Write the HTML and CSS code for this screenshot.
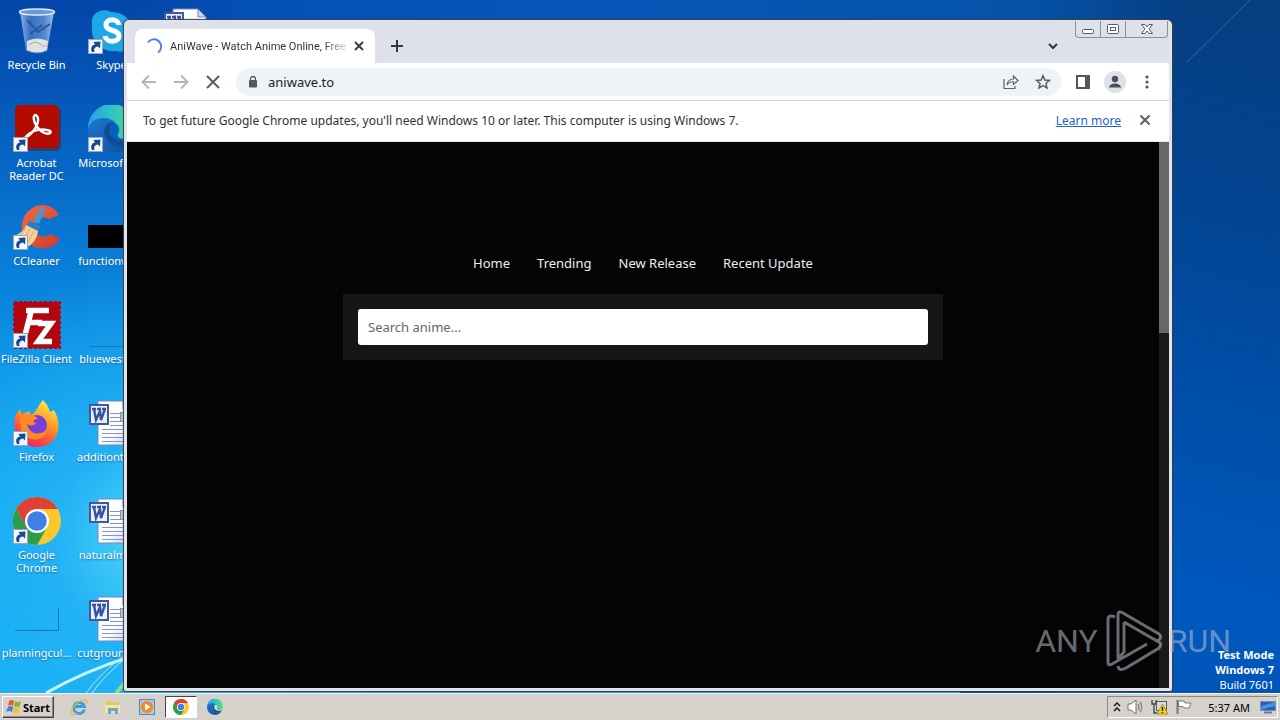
FILE: index.html
```html
<!DOCTYPE html>
<html lang="en">
<head>
<meta charset="utf-8">
<title>Desktop</title>
<link rel="stylesheet" href="styles.css">
</head>
<body>
<svg class="defs" aria-hidden="true">
  <defs>
    <linearGradient id="glass" x1="0" x2="1"><stop offset="0" stop-color="#9dbce6"/><stop offset=".3" stop-color="#3f74c4"/><stop offset=".7" stop-color="#5a8ad0"/><stop offset="1" stop-color="#a9c6ea"/></linearGradient>
    <linearGradient id="edgeTop" x1="0" x2="1"><stop offset="0" stop-color="#2b9fe6"/><stop offset=".5" stop-color="#2ec5c8"/><stop offset="1" stop-color="#5fdc70"/></linearGradient>
    <linearGradient id="edgeLow" x1="0" y1="0" x2="1" y2="1"><stop offset="0" stop-color="#1b78cf"/><stop offset="1" stop-color="#0c4f9e"/></linearGradient>
    <linearGradient id="fire" x1=".8" y1="0" x2=".3" y2="1"><stop offset="0" stop-color="#fff04a"/><stop offset=".4" stop-color="#ffa02a"/><stop offset=".75" stop-color="#ff4a3e"/><stop offset="1" stop-color="#e8206c"/></linearGradient>
    <linearGradient id="paper" x1="0" y1="0" x2="1" y2="1"><stop offset="0" stop-color="#fff"/><stop offset=".6" stop-color="#fbfcff"/><stop offset="1" stop-color="#c8cdec"/></linearGradient>
    <linearGradient id="cc" x1="0" y1="0" x2="1" y2="1"><stop offset="0" stop-color="#ee6a4c"/><stop offset="1" stop-color="#d23a25"/></linearGradient>
    <symbol id="arrow" viewBox="0 0 15 15">
      <rect x=".5" y=".5" width="14" height="14" fill="#f4f6fa" stroke="#9aa4b4"/>
      <path d="M4 13C2 9 4 6 7 5.500L5.500 3L12.500 2.500L12 9.500L10 7.500C7 8 5.500 9.500 6.500 13Z" fill="#174a96"/>
    </symbol>
    <symbol id="chrome" viewBox="0 0 48 48">
      <circle cx="24" cy="24" r="24" fill="#fcc62f"/>
      <path d="M24 24L13.600 30L3.200 12A24 24 0 0 1 44.800 12H24Z" fill="#dd4334"/>
      <path d="M3.200 12A24 24 0 0 0 24 48L34.400 30L24 24L13.600 30Z" fill="#2d9c4b"/>
      <circle cx="24" cy="24" r="12" fill="#fff"/><circle cx="24" cy="24" r="9.800" fill="#3f7fe8"/>
    </symbol>
    <symbol id="edge" viewBox="0 0 48 48">
      <path d="M0 24A24 24 0 0 1 48 22C48 31 41 34 36 34C31 34 29 31 30 29C33 25 31 16 20 16C10 16 3 21 0 24Z" fill="url(#edgeTop)"/>
      <path d="M0 25C2 12 18 10 27 17C18 16 15 24 17 31C20 41 33 43 43 37C38 46 28 49 20 47.500C8 46 0 36 0 25Z" fill="url(#edgeLow)"/>
      <path d="M17 31C15 24 18 18 24 18C18 24 22 37 38 36C42 36 45 34 45 34C40 44 22 45 17 31Z" fill="#134a91"/>
    </symbol>
    <symbol id="word" viewBox="0 0 48 48">
      <path d="M10 1H35L43 9V45H10Z" fill="url(#paper)" stroke="#7885bc"/>
      <path d="M35 1V9H43Z" fill="#cdd5ee" stroke="#7885bc"/>
      <path d="M22 13.500H32M22 17.500H32M22 21.500H32M22 25.500H40M14 29.500H40M14 33.500H40M14 37.500H40M14 41.500H40" stroke="#8693cf"/>
      <rect x="32.500" y="12.500" width="8" height="9" fill="#b9c3d6" stroke="#8592a8"/>
      <rect x="2" y="5" width="18" height="19" fill="#e9effb" stroke="#42599f" stroke-width="2"/>
      <path d="M4 9H8M9 9H13M14 9H18M6 9L8 20L12 11L13 20L17 9" fill="none" stroke="#3553a0" stroke-width="2.400"/>
    </symbol>
  </defs>
</svg>

<div class="screen">
<main class="desktop">
  <svg class="rays" viewBox="0 0 130 90" aria-hidden="true">
    <path d="M46 90Q85 68 130 54" stroke="#c6f5fc" stroke-width="3"/>
    <path d="M86 90Q102 68 130 48M92 90Q106 70 130 52" stroke="#a5ecf8" stroke-width="1"/>
    <path d="M116 90L130 74" stroke="#7fe38c" stroke-width="4"/>
  </svg>
  <svg class="streak" viewBox="0 0 120 80" aria-hidden="true"><path d="M27 62L90 0" stroke="#4a7fba" stroke-width="1" opacity=".6"/></svg>

  <ul class="icons">
    <li><svg viewBox="0 0 48 48"><path d="M7 4L13 43Q24 48 34 43L41 4Z" fill="url(#glass)" opacity=".9"/><path d="M14 33Q24 28 35 33L34 42Q24 47 14 42Z" fill="#dfe3e4"/><path d="M16 37Q22 32 27 36T34 37" fill="none" stroke="#bda68b"/><path d="M14 12L25 24L37 16M17 26L29 17" fill="none" stroke="#2856a4" stroke-width="2"/><ellipse cx="24" cy="4" rx="17.500" ry="3" fill="#6b9adb" stroke="#dfe9f5" stroke-width="1.500"/></svg><span>Recycle Bin</span></li>
    <li><svg viewBox="0 0 48 48"><rect x="2" y="1" width="46" height="44" rx="5" fill="#601418" opacity=".5"/><rect x="2" y="-1" width="44" height="43" rx="5" fill="#b30b00"/><path d="M12 32C20 28 28 16 24 10C20 6 18 16 28 25C36 31 42 25 34 24C25 22 16 26 12 32Z" fill="none" stroke="#fff" stroke-width="2.400"/><use href="#arrow" x="0" y="31" width="15" height="15"/></svg><span>Acrobat Reader DC</span></li>
    <li><svg viewBox="0 0 48 48"><path d="M46 11L36 15C28 10 22 16 22 24C23 33 32 35 38 30L47 35C38 49 17 47 10 31C5 13 18 0 31 1C38 2 43 5 46 11Z" fill="url(#cc)"/><path d="M29 3L32 5L26 20L20 17Z" fill="#3d9bd5"/><path d="M16 17L28 22L25 28L13 22Z" fill="#2c7fbf"/><path d="M13 21L25 27C24 35 20 40 13 44L1 32C6 30 11 27 13 21Z" fill="#f2d29c"/><path d="M17 25L9 37M21 27L14 40M13 24L5 34" stroke="#d9ac6c"/><use href="#arrow" x="0" y="31" width="15" height="15"/></svg><span>CCleaner</span></li>
    <li><svg viewBox="0 0 48 48"><rect x="1" y="0" width="46" height="46" fill="#b4060e" stroke="#b4060e" stroke-width="2" stroke-dasharray="3 2"/><path d="M13 8.500H36M18.500 8L11 37M15 20.500H29M25 21.500H38L25 39.500H39" fill="none" stroke="#fff" stroke-width="5.500"/><use href="#arrow" x="0" y="31" width="15" height="15"/></svg><span>FileZilla Client</span></li>
    <li><svg viewBox="0 0 48 48"><path d="M30 0C34 4 36 8 37 12L41 10C51 27 44 46 25 47C8 48-3 30 3 14L7 9L9 14L16 11L18 15C24 12 25 5 30 0Z" fill="url(#fire)"/><circle cx="24" cy="25" r="10" fill="#7640d8"/><path d="M7 18C14 14 22 14 25 19C20 19 19 22 23 23C20 27 16 25 14 24C16 34 27 37 34 29C34 42 13 44 8 29Z" fill="#ff8a25"/><use href="#arrow" x="0" y="31" width="15" height="15"/></svg><span>Firefox</span></li>
    <li><svg viewBox="0 0 48 48"><use href="#chrome" y="-1" width="48" height="48"/><use href="#arrow" x="0" y="31" width="15" height="15"/></svg><span>Google Chrome</span></li>
    <li><svg viewBox="0 0 48 48"><path d="M2 34.500H45.500V12" fill="none" stroke="#1b73b8"/></svg><span>planningcul...</span></li>

    <li><svg viewBox="0 0 48 48"><path d="M4 11A13 13 0 0 1 23 4A21 21 0 0 1 45 28A13 13 0 0 1 28 43A21 21 0 0 1 4 20Z" fill="#1ba8e6"/><path d="M31 17C30 10 18 10 18 17C18 24 31 21 31 28C31 35 18 35 17 28" fill="none" stroke="#fff" stroke-width="5"/><use href="#arrow" x="0" y="31" width="15" height="15"/></svg><span>Skype</span></li>
    <li><svg viewBox="0 0 48 48"><use href="#edge" y="-1" width="48" height="48"/><use href="#arrow" x="0" y="31" width="15" height="15"/></svg><span>Microsoft E...</span></li>
    <li><svg viewBox="0 0 48 48"><rect y="21" width="48" height="23"/></svg><span>functionwa...</span></li>
    <li><svg viewBox="0 0 48 48"><path d="M2 44.500H45.500" stroke="#1b73b8"/></svg><span>bluewester...</span></li>
    <li><svg viewBox="0 0 48 48"><use href="#word" width="48" height="48"/></svg><span>additiontrai...</span></li>
    <li><svg viewBox="0 0 48 48"><use href="#word" width="48" height="48"/></svg><span>naturalmor...</span></li>
    <li><svg viewBox="0 0 48 48"><use href="#word" width="48" height="48"/></svg><span>cutgrounds...</span></li>

    <li><svg viewBox="0 0 48 48"><use href="#word" width="48" height="48"/></svg></li>
  </ul>

  <section class="window">
    <header class="tabs">
      <div class="tab">
        <svg width="18" height="18" viewBox="0 0 18 18"><path d="M2 5.500A7.200 7.200 0 1 1 12 15.500" fill="none" stroke="#4f80dc" stroke-width="2"/></svg>
        <span class="tab-title">AniWave - Watch Anime Online, Free</span>
        <button aria-label="Close tab"><svg width="10" height="10" viewBox="0 0 10 10"><path d="M1 1L9 9M9 1L1 9" stroke="#3c4043" stroke-width="2"/></svg></button>
      </div>
      <button class="new-tab" aria-label="New tab"><svg width="12" height="12" viewBox="0 0 12 12"><path d="M6 0V12M0 6H12" stroke="#34383d" stroke-width="2"/></svg></button>
      <button class="tab-search" aria-label="Search tabs"><svg width="10" height="7" viewBox="0 0 10 7"><path d="M1 1L5 5L9 1" fill="none" stroke="#34383d" stroke-width="2"/></svg></button>
      <div class="caption">
        <button aria-label="Minimize"><svg width="12" height="12" viewBox="0 0 12 12"><rect x=".5" y="6.500" width="11" height="4" rx="1" fill="#fff" stroke="#555b66"/></svg></button>
        <button aria-label="Maximize"><svg width="12" height="10" viewBox="0 0 12 10"><rect x=".5" y=".5" width="11" height="9" rx="1" fill="#fff" stroke="#555b66"/><rect x="3.500" y="3.500" width="5" height="3" fill="none" stroke="#555b66"/></svg></button>
        <button class="caption-close" aria-label="Close"><svg width="12" height="10" viewBox="0 0 12 10"><path d="M.5.5H4L6 3L8 .5H11.500L8 5L11.500 9.500H8L6 7L4 9.500H.5L4 5Z" fill="#fff" stroke="#555b66"/></svg></button>
      </div>
    </header>

    <div class="toolbar">
      <button aria-label="Back"><svg width="16" height="16" viewBox="0 0 16 16"><path d="M15 8H2M8 1.500L1.500 8L8 14.500" fill="none" stroke="#b5b8bb" stroke-width="2"/></svg></button>
      <button aria-label="Forward"><svg width="16" height="16" viewBox="0 0 16 16"><path d="M1 8H14M8 1.500L14.500 8L8 14.500" fill="none" stroke="#b5b8bb" stroke-width="2"/></svg></button>
      <button aria-label="Stop"><svg width="14" height="14" viewBox="0 0 14 14"><path d="M1 1L13 13M13 1L1 13" stroke="#5a5e63" stroke-width="2"/></svg></button>
      <div class="omnibox">
        <svg width="10" height="12" viewBox="0 0 10 12"><rect x="1" y="4" width="8" height="7.500" rx="1" fill="#54585d"/><path d="M2.500 5V3A2.500 2.500 0 0 1 7.500 3V5" fill="none" stroke="#54585d" stroke-width="1.300"/></svg>
        <input type="text" value="aniwave.to" aria-label="Address">
        <button aria-label="Share"><svg width="16" height="16" viewBox="0 0 16 16"><path d="M1 5V14.500H12V12M4 11C4.500 7 7 5 10.500 5V2L15 6.500L10.500 10.500V7.800C7.500 7.500 5.500 8.500 4 11Z" fill="none" stroke="#5f6368" stroke-width="1.200"/></svg></button>
        <button aria-label="Bookmark"><svg width="16" height="16" viewBox="0 0 16 16"><path d="M8 1.800L9.800 6L14.500 6.400L11 9.500L12 14L8 11.700L4 14L5 9.500L1.500 6.400L6.200 6Z" fill="none" stroke="#5a5e63" stroke-width="1.500"/></svg></button>
      </div>
      <button aria-label="Side panel"><svg width="14" height="14" viewBox="0 0 14 14"><path d="M0 0H14V14H0ZM2 2V12H9V2Z" fill="#54585d" fill-rule="evenodd"/></svg></button>
      <button aria-label="Profile"><svg width="22" height="22" viewBox="0 0 22 22"><circle cx="11" cy="11" r="11" fill="#dee1e6"/><circle cx="11" cy="8" r="3.200" fill="#484f5e"/><path d="M5 16.500V15.500Q7 12.500 11 12.500T17 15.500V16.500Z" fill="#484f5e"/></svg></button>
      <button aria-label="Menu"><svg width="4" height="14" viewBox="0 0 4 14"><g fill="#54585d"><circle cx="2" cy="2" r="1.600"/><circle cx="2" cy="7" r="1.600"/><circle cx="2" cy="12" r="1.600"/></g></svg></button>
    </div>

    <div class="infobar">
      <span>To get future Google Chrome updates, you'll need Windows 10 or later. This computer is using Windows 7.</span>
      <a href="#">Learn more</a>
      <button aria-label="Dismiss"><svg width="10" height="10" viewBox="0 0 10 10"><path d="M.5.5L9.500 9.500M9.500.5L.5 9.500" stroke="#5a5e63" stroke-width="2"/></svg></button>
    </div>

    <div class="page">
      <div class="site">
        <nav>
          <a href="#">Home</a><a href="#">Trending</a><a href="#">New Release</a><a href="#">Recent Update</a>
        </nav>
        <form class="search"><input type="text" placeholder="Search anime..." aria-label="Search anime"></form>
      </div>
      <div class="scroll"><div class="thumb"></div></div>
    </div>
  </section>

  <div class="watermark">
    <span>ANY</span>
    <svg width="58" height="62" viewBox="0 0 58 62"><path d="M9 7Q2 4 2 10V53Q2 56 6 54L41 34M12 49V5Q12 0 17 3L53 24Q57 28 51 31L18 12M18 12V42L12 49M12 56Q13 62 20 58L53 38Q57 33 51 31" fill="none" stroke="currentColor" stroke-width="3"/></svg>
    <span>RUN</span>
  </div>

  <div class="build"><b>Test Mode</b><b>Windows 7</b><span>Build 7601</span></div>
</main>

<footer class="taskbar">
  <button class="start"><svg width="16" height="16" viewBox="0 0 16 16"><path d="M3 2Q6 0 8 2L7 7Q4 5 2 7Z" fill="#ed5b2b"/><path d="M9 2Q12 4 15 2L14 7Q11 9 8 7Z" fill="#80b83a"/><path d="M2 8Q5 6 7 8L6 13Q3 11 0 13Z" fill="#3b83d6"/><path d="M8 8Q11 10 14 8L12 14Q9 15 7 13Z" fill="#f6bf26"/></svg>Start</button>
  <div class="quick">
    <button aria-label="Internet Explorer"><svg width="18" height="18" viewBox="0 0 18 18"><path d="M14.500 11.500A5.500 5.500 0 1 1 14.500 8.500H5" fill="none" stroke="#3a9ee0" stroke-width="2.800"/><path d="M1 16C-1 10 12 0 16 2Q18 3 16 6M1 16Q3 18 7 15" fill="none" stroke="#e3ba3d" stroke-width="1.300"/></svg></button>
    <button aria-label="Explorer"><svg width="18" height="18" viewBox="0 0 18 18"><path d="M2 3H7L8 4H15V15H2Z" fill="#e5c667"/><path d="M1 7H16V15H1Z" fill="#f7e39b"/><path d="M4 10H14V16H11V13H7V16H4Z" fill="#67a9d6"/></svg></button>
    <button aria-label="Media Player"><svg width="18" height="18" viewBox="0 0 18 18"><rect x="1.500" y="1.500" width="15" height="15" fill="#a7c7ea" stroke="#5d86bd"/><circle cx="9" cy="9" r="6" fill="#f28a1c"/><path d="M7 5.500L12.500 9L7 12.500Z" fill="#fff"/></svg></button>
    <button class="active" aria-label="Chrome"><svg width="16" height="16" viewBox="0 0 48 48"><use href="#chrome" width="48" height="48"/></svg></button>
    <button aria-label="Edge"><svg width="16" height="16" viewBox="0 0 48 48"><use href="#edge" width="48" height="48"/></svg></button>
  </div>
  <div class="tray">
    <svg width="8" height="12" viewBox="0 0 8 12"><path d="M1 5L4 2L7 5M1 10L4 7L7 10" fill="none" stroke="#111" stroke-width="1.400"/></svg>
    <svg width="18" height="16" viewBox="0 0 18 16"><path d="M1 5H4L9 1V15L4 11H1Z" fill="#fff" stroke="#70747a"/><path d="M11 5Q13 8 11 11M13 3Q16.500 8 13 13" fill="none" stroke="#85898e" stroke-width="1.400"/></svg>
    <svg width="18" height="16" viewBox="0 0 18 16"><rect x="5.500" y="2.500" width="10" height="9" fill="#d7dbe0" stroke="#55595f"/><path d="M1 1V5H5V1M3 5V14H6" fill="none" stroke="#44484e" stroke-width="1.400"/><path d="M11.500 5L17 15H6Z" fill="#f6cf2c" stroke="#b79005"/><path d="M11.500 8V12M11.500 13V14" stroke="#111" stroke-width="1.300"/></svg>
    <svg width="18" height="16" viewBox="0 0 18 16"><path d="M2.500 1V15" stroke="#74787e" stroke-width="2"/><path d="M3.500 2H9L10 4H16L14 9H9L8 7.500H3.500Z" fill="#fff" stroke="#777"/></svg>
    <time>5:37 AM</time>
    <svg width="16" height="14" viewBox="0 0 16 14"><path d="M.5 1.500H15.500V10.500H.5Z" fill="#1f5fc0" stroke="#7890b5"/><path d="M1 6L15 2V6L1 10Z" fill="#4b90dd"/><path d="M4 12.500H12" stroke="#6d7c90" stroke-width="2"/></svg>
  </div>
</footer>
</div>
</body>
</html>
```
FILE: styles.css
```css
* { box-sizing: border-box; }
body {
  margin: 0;
  font-family: "Noto Sans", "Open Sans", sans-serif;
  font-size: 12px;
  color: #303236;
}
button {
  display: flex;
  align-items: center;
  justify-content: center;
  padding: 0;
  border: 0;
  background: none;
  font: inherit;
}
svg { display: block; flex: none; }
.defs { position: absolute; width: 0; height: 0; }

.screen { display: flex; flex-direction: column; height: 100vh; }
.desktop {
  position: relative;
  flex: 1;
  overflow: hidden;
  background:
    radial-gradient(circle at 12% 78%, #4ed8f6 0, rgba(40, 180, 245, .8) 8%, rgba(10, 160, 245, 0) 22%),
    linear-gradient(180deg, #0345a8 0, #0556b8 13%, #0879d4 35%, #0a96e8 55%, #0daaf4 75%, #12b0f6 100%);
}
.desktop::before {
  content: "";
  position: absolute;
  inset: 0 0 0 75%;
  background: linear-gradient(195deg, #073f80 0, #03438f 25%, #004da6 50%, #0058be 80%, #0052b4 100%);
}
.desktop::after {
  content: "";
  position: absolute;
  inset: 0 0 auto 0;
  height: 24px;
  background: linear-gradient(90deg, rgba(3, 69, 168, 0) 10%, #0450b4 20%, #0757b8 50%, #0652a8 80%, rgba(6, 71, 143, 0) 92%);
}
.rays { position: absolute; left: 0; bottom: 0; width: 130px; fill: none; }
.streak { position: absolute; right: 0; top: 0; width: 120px; z-index: 1; }

.icons {
  position: relative;
  z-index: 1;
  display: grid;
  grid-auto-flow: column;
  grid-template-rows: repeat(7, 98px);
  grid-auto-columns: 73px;
  column-gap: 2px;
  justify-content: start;
  margin: 0;
  padding: 8px 0 0;
  list-style: none;
}
.icons li { display: flex; flex-direction: column; align-items: center; gap: 2px; }
.icons svg { width: 48px; height: 48px; overflow: visible; }
.icons span {
  font-size: 11px;
  line-height: 13px;
  text-align: center;
  color: #fff;
  text-shadow: 0 1px 2px #1a62a8;
}

.window {
  position: absolute;
  z-index: 2;
  inset: 20px 108px 2px 124px;
  display: flex;
  flex-direction: column;
  border: solid #e2e4ea;
  border-width: 1px 3px 3px;
  border-radius: 5px 5px 2px 2px;
  background: #fff;
  box-shadow: 0 0 1px 1px #34404e;
}
.tabs {
  position: relative;
  display: flex;
  align-items: flex-end;
  height: 42px;
  padding: 0 105px 0 8px;
  background: #dee1e9;
}
.tab {
  display: flex;
  align-items: center;
  gap: 6px;
  width: 240px;
  height: 34px;
  padding: 0 11px;
  border-radius: 8px 8px 0 0;
  background: #fff;
}
.tab-title {
  flex: 1;
  white-space: nowrap;
  font: 11px "Roboto", sans-serif;
  mask-image: linear-gradient(90deg, #000 86%, rgba(0, 0, 0, .1));
}
.tab button { width: 10px; }
.new-tab { width: 44px; height: 34px; }
.tab-search { width: 22px; height: 34px; margin-left: auto; }
.caption {
  position: absolute;
  top: 0;
  right: 1px;
  display: flex;
  height: 17px;
  border: 1px solid #8a909b;
  border-top: 0;
  border-radius: 0 0 4px 4px;
}
.caption button { width: 25px; border-right: 1px solid #8a909b; }
.caption .caption-close { width: 41px; border: 0; }

.toolbar {
  display: flex;
  align-items: center;
  height: 38px;
  padding: 0 6px;
  border-bottom: 1px solid #d5d7da;
}
.toolbar > button { width: 32px; height: 28px; }
.omnibox {
  flex: 1;
  display: flex;
  align-items: center;
  height: 28px;
  margin: 0 6px 0 7px;
  padding: 0 2px 0 12px;
  border-radius: 14px;
  background: #f0f3f5;
}
.omnibox input {
  flex: 1;
  min-width: 0;
  padding: 0 10px;
  border: 0;
  background: none;
  font: 13px "Noto Sans", sans-serif;
  color: #202124;
}
.omnibox button { width: 32px; }

.infobar {
  display: flex;
  align-items: center;
  height: 41px;
  padding: 0 19px 2px 16px;
  border-bottom: 1px solid #e4e4e4;
}
.infobar a { margin-left: auto; margin-right: 19px; color: #1a62cc; }

.page { flex: 1; display: flex; background: #040404; }
.site { flex: 1; padding: 111px 20px 0; }
nav { display: flex; justify-content: center; gap: 27px; line-height: 20px; font-size: 13px; }
nav a { color: #eee; text-decoration: none; }
.search { max-width: 600px; margin: 21px auto 0; padding: 15px; background: #161616; }
.search input {
  display: block;
  width: 100%;
  height: 36px;
  padding: 0 10px;
  border: 0;
  border-radius: 3px;
  background: #fff;
  font: 13px "Noto Sans", sans-serif;
}
.search input::placeholder { color: #666; }
.scroll { width: 10px; background: #1a1a1a; }
.thumb { height: 35%; background: #686868; }

.watermark {
  position: absolute;
  z-index: 3;
  right: 49px;
  bottom: 21px;
  display: flex;
  align-items: center;
  gap: 4px;
  color: rgba(190, 195, 205, .55);
  font: 32px "Roboto", sans-serif;
}
.watermark svg { margin-left: 4px; }
.build {
  position: absolute;
  z-index: 4;
  right: 6px;
  bottom: 1px;
  display: flex;
  flex-direction: column;
  align-items: flex-end;
  font-size: 11px;
  line-height: 15px;
  color: #fff;
}

.taskbar {
  display: flex;
  align-items: center;
  height: 27px;
  padding: 0 2px;
  border-top: 1px solid #f8f7f4;
  background: #d6d1ca;
}
.start {
  gap: 1px;
  width: 52px;
  height: 22px;
  border: 1px solid;
  border-color: #fff #444 #444 #fff;
  box-shadow: inset -1px -1px #8c8983;
  font-size: 11px;
  font-weight: 700;
  color: #000;
}
.quick { display: flex; padding-left: 8px; }
.quick button { width: 34px; height: 22px; }
.quick .active {
  width: 32px;
  margin: 0 1px;
  border: 1px solid;
  border-color: #444 #fff #fff #444;
  background: #fff;
}
.tray {
  display: flex;
  align-items: center;
  gap: 6px;
  height: 22px;
  margin-left: auto;
  padding: 0 1px 0 5px;
  border: 1px solid;
  border-color: #8c8983 #fff #fff #8c8983;
  font-size: 11px;
  color: #000;
}
.tray time { padding: 0 4px 0 9px; }
```
